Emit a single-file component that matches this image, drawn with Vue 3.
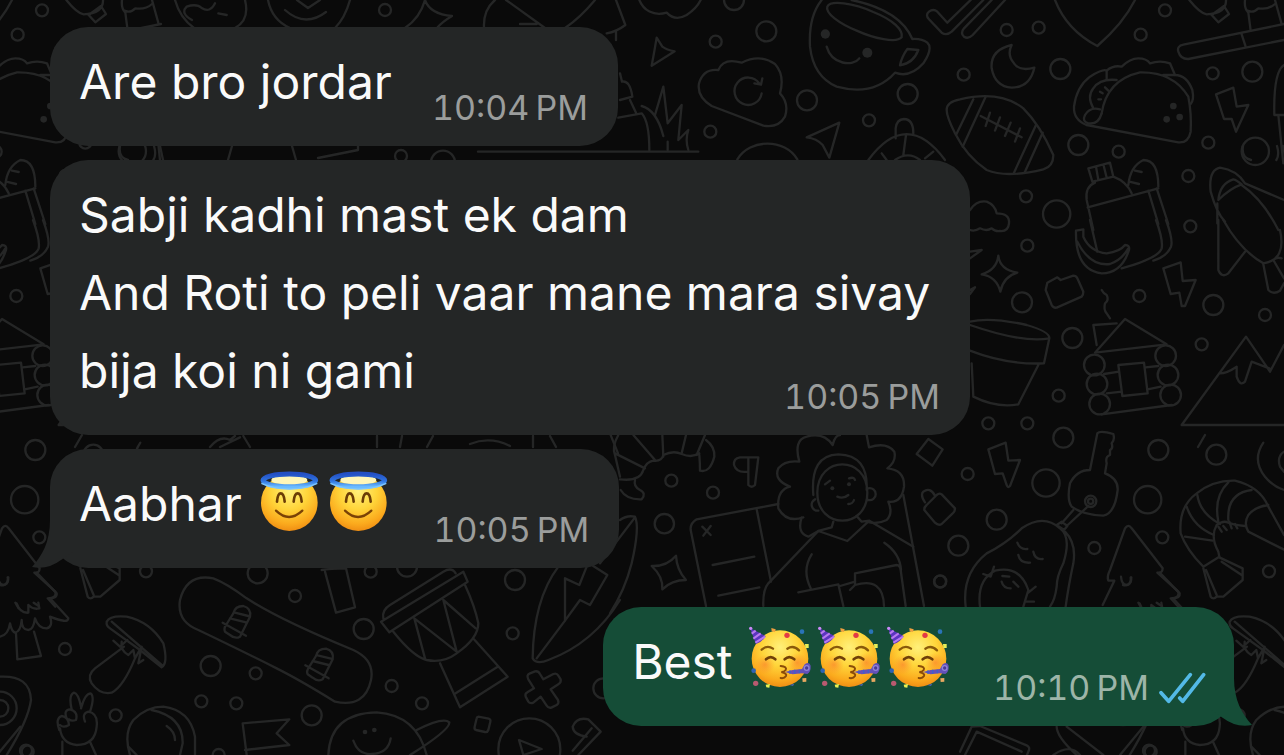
<script setup>
const messages = [
  { id: 1, text: 'Are bro jordar', time: '10:04\u2009PM' },
  { id: 2, text: 'Sabji kadhi mast ek dam\nAnd Roti to peli vaar mane mara sivay bija koi ni gami', time: '10:05\u2009PM', long: true },
  { id: 3, text: 'Aabhar ', emoji: 'angel', count: 2, time: '10:05\u2009PM', tail: true },
  { id: 4, text: 'Best ', emoji: 'party', count: 3, time: '10:10\u2009PM', tail: true, mine: true },
]

// Wallpaper doodles, grouped by area; each area is drawn on a three-times-finer grid.
const areas = [
  {
    x: 600, y: 0,
    circles: [[402, 0, 30], [499, 94, 30], [347, 125, 18], [331, 395, 18], [621, 301, 30], [807, 361, 18], [923, 282, 30]],
    dots: [[676, 102, 14], [802, 158, 15]],
    paths: [
      'M48 0L76 75Q50 95 20 100M48 95V120',
      'M118 0C130 30 160 50 200 38Q225 65 260 45Q290 25 302 0',
      'M170 113L187 140Q200 150 224 154L155 197Q163 155 170 113Z',
      'M355 210Q370 172 425 188Q480 160 525 192Q555 225 540 280Q568 310 555 350Q535 385 490 377L335 318Q290 290 297 250Q310 205 355 210Z',
      'M485 280A41 41 0 1 1 478 250M487 235L483 254L463 250',
      'M665 0Q625 50 630 140Q640 230 710 260Q820 290 885 218Q930 235 970 190Q1000 145 982 128Q965 115 937 117Q900 30 755 0',
      'M682 20C690 0 760 8 820 36C880 60 910 90 905 112C890 130 820 115 770 92C720 72 675 40 682 20Z',
      'M922 147L955 150Q940 190 900 196Q905 170 922 147Z',
      'M680 140C695 195 760 200 778 175',
      'M125 318Q170 330 190 408M165 345L190 260L203 370L245 315L235 420L265 390Q255 420 265 450M203 425V450',
      'M-366 455H295M60 220L66 245Q90 240 97 290L60 300M90 300L108 338M55 353L125 340Q148 365 148 450',
      'M718 368L688 473L668 435Q650 415 620 412Z',
      'M412 478C450 415 555 415 592 478',
      'M887 415V385Q890 358 912 357Q940 358 940 400M805 480Q920 325 1035 480M918 405L910 465M845 460L860 480M1000 455L975 475M885 480Q925 452 960 480',
    ],
  },
  {
    x: 940, y: 0,
    circles: [[200, 90, 18], [296, 83, 18], [71, 224, 18], [361, 207, 30], [415, 435, 30], [536, 455, 18], [258, 589, 18], [350, 642, 41], [675, 31, 18], [602, 104, 18], [818, 220, 18], [937, 215, 30], [805, 428, 18], [946, 454, 41], [745, 528, 18], [751, 679, 18]],
    dots: [[700, 318, 10], [719, 351, 10], [680, 358, 10]],
    paths: [
      'M92 0L22 68L-8 35Q-20 25 -33 35Q-45 45 -33 58L5 98Q20 108 35 95L130 0M155 0L72 85Q60 100 72 110Q85 118 98 105L195 0',
      'M20 330Q20 305 60 298Q180 270 250 325Q300 375 340 465Q340 500 310 508Q200 535 140 510Q80 470 45 400Q20 350 20 330Z',
      'M100 298L48 405M137 290L68 440M288 375L222 518M308 398L255 515M122 348L245 412M150 338L137 378M180 352L165 392M212 368L195 408M240 385L225 425',
      'M215 135Q150 150 155 205Q165 260 215 263Q270 262 283 203Q240 215 222 190Q200 165 215 135Z',
      'M345 0Q380 90 472 138Q550 70 585 0',
      'M748 0Q780 40 800 43Q860 40 858 0M815 45L852 18L867 42L835 67Z',
      'M1032 72L730 134Q710 138 715 155Q722 178 745 177L1032 120M905 103L917 140',
      'M932 92L925 38Q912 25 915 0M922 32Q940 40 955 25Q985 30 1005 12M1005 0L1025 72',
      'M440 375Q400 360 402 320Q410 260 450 230Q490 205 500 212Q520 195 545 200Q570 175 595 175Q620 175 630 190Q660 180 690 190L705 225Q740 225 757 270Q763 300 752 312',
      'M485 340Q500 240 600 217Q700 215 745 290Q755 340 752 395Q745 430 715 427L440 375M670 225H705M500 212V238',
      'M485 340Q475 375 445 370Q425 365 435 345Q450 320 480 328M530 240Q480 235 460 265Q440 290 460 325M480 275L488 280M495 262L505 272M475 298H483',
      'M828 283L880 263L890 320L925 315L888 395L875 357H852Z',
      'M1032 195Q1000 215 1003 345H1032M1015 345L1030 490',
      'M445 505L510 488L520 530L457 545ZM468 500L475 540M490 493L500 533M465 548Q435 560 440 600L460 690M520 530Q560 545 575 580M443 622L655 565M565 555Q570 500 610 480Q655 480 655 560M585 512L605 516M568 545L597 552M625 572L655 672M650 565L685 672',
      'M812 575Q805 510 840 503Q890 510 915 550L1032 600M812 575Q830 640 855 665M905 555Q970 600 1015 690M835 600Q840 550 880 538Q890 540 905 553Q870 565 835 600ZM832 610V670',
      'M90 630Q110 600 140 605Q165 615 170 640Q210 640 207 670Q205 695 180 693Q165 695 155 685Q140 695 120 685Q105 695 90 690',
    ],
  },
  {
    x: 940, y: 220,
    circles: [[262, 77, 18], [246, 247, 30], [397, 354, 30], [356, 527, 18], [145, 610, 18], [262, 610, 18], [370, 653, 30], [598, 228, 18], [820, 255, 30], [975, 285, 18], [785, 373, 18], [463, 435, 31], [471, 492, 31], [479, 552, 31], [677, 407, 31], [684, 465, 31], [692, 525, 31]],
    dots: [],
    paths: [
      'M175 107Q180 150 232 158Q190 170 181 215Q170 170 125 163Q170 150 175 107ZM90 95L125 90L90 115M90 210L105 202L90 222',
      'M322 188L352 172L362 180L400 167Q408 167 412 175L430 215Q430 225 425 230L350 263Q340 265 335 255L317 210Z',
      'M408 32L430 28L430 50Q450 95 500 100Q540 95 555 75Q570 75 567 90Q545 160 485 160Q405 150 408 32ZM412 65Q450 140 510 132Q545 120 565 85',
      'M450 0L472 95M648 0Q670 60 665 85Q655 115 545 145M678 0Q700 60 693 80Q680 110 640 122',
      'M485 210Q490 220 500 225Q508 240 495 250Q490 270 500 280L510 295',
      'M670 145L722 127L728 183L767 180L735 258H725L718 218L692 222Z',
      'M465 398L555 297L680 373ZM470 375L460 315L530 310M485 583L695 555M535 435L612 428L623 520L547 528ZM492 462L537 455M500 520L545 515M617 442L655 438M623 508L662 500',
      'M90 305Q150 290 260 315Q330 335 328 355Q250 370 90 315M328 355L312 430Q200 435 90 392M295 435L235 553Q170 565 100 530L95 430',
      'M1060 615H725L918 350L990 455L1032 375M840 460Q860 460 890 440V470Q900 500 915 485L935 425L988 445',
      'M835 0V150Q845 175 865 160L915 95M850 0Q900 90 970 130Q1040 120 1020 30M970 133L985 210Q1000 225 1020 212L1032 190M1000 120L1032 175M1000 120Q1010 110 1025 115',
    ],
  },
  {
    x: 940, y: 420,
    circles: [[83, 162, 18], [318, 189, 41], [170, 299, 30], [55, 377, 30], [0, 485, 18], [655, 90, 30], [829, 104, 30], [623, 239, 41], [463, 384, 18], [667, 352, 18], [987, 454, 18], [452, 244, 17], [452, 244, 8]],
    dots: [],
    paths: [
      'M145 88L197 68L205 122L240 120L210 198Q203 205 200 195L188 160L165 162Z',
      'M450 150L472 40Q480 30 520 42Q525 60 515 70Q520 85 510 90V105Q495 110 500 130L495 160Q535 175 533 210Q525 280 490 287Q430 285 395 260Q380 240 390 190Q410 150 450 150Z',
      'M400 270L365 310M445 258L380 318M350 315L365 305L382 318L372 330Z',
      'M77 560Q65 460 140 400Q200 370 245 325Q310 280 360 325Q395 350 370 430Q350 470 350 500Q345 540 330 560M375 335Q410 370 400 430Q385 500 377 560',
      'M120 560Q110 480 165 452Q240 435 265 510L250 560M232 368Q240 390 262 387M235 405Q240 430 270 428M280 395Q285 420 308 417M130 462L152 470L162 440M265 518L287 500M258 545H282M185 485Q190 505 212 505M187 468L208 470M220 485L235 500',
      'M488 555L523 482H505Q500 470 510 450L555 325Q565 310 575 325L668 445Q668 460 652 458L715 515Q720 535 692 535L715 560M543 470Q545 495 560 495Q575 492 572 472M595 548L605 565M650 548L665 558',
      'M790 440Q740 390 722 340Q715 260 770 220Q820 180 885 182Q960 200 985 260L1032 345M1050 398L925 335Q910 310 925 285Q945 260 985 255M915 318Q880 315 865 308Q850 300 830 315Q810 350 835 395L838 410L790 440',
      'M735 350L818 362M740 260Q760 320 822 345M772 225Q780 280 840 312M865 187Q820 230 835 305M935 210Q860 220 865 300M835 320L845 335M850 318L860 330M868 305L875 325M885 312L892 325',
      'M790 445L812 530Q820 540 830 530L850 530L908 480V445L838 412M798 450L830 525M845 425L905 465',
      'M970 68Q935 120 975 170Q1000 200 1032 210M1032 95Q1010 110 1020 140L1032 155',
    ],
  },
  {
    x: 600, y: 430,
    circles: [[214, 152, 18], [339, 188, 18], [193, 281, 29], [1021, 454, 18]],
    dots: [[697, 175, 6], [747, 163, 6]],
    paths: [
      'M55 15Q35 50 45 75L60 140M45 70L135 115M100 15L165 90M187 15L190 80M258 15L245 70M315 15L290 75',
      'M60 148Q120 155 130 120Q140 95 160 92Q185 95 190 75Q220 60 245 72Q275 85 298 70M318 30Q345 50 343 80Q330 130 300 122Q300 100 298 75M62 180Q80 210 125 208Q140 190 120 180Q100 170 105 150',
      'M475 82L465 165Q455 175 445 165V85M475 82H420Q400 85 402 105Q410 130 443 125',
      'M535 222L290 268Q270 280 272 300L318 528M470 238L513 455M307 290L332 315M332 288L310 317M338 405L463 380M355 497L478 472',
      'M228 377Q230 420 258 450Q215 450 187 478Q190 440 155 408Q200 410 228 377Z',
      'M60 270Q80 255 105 260Q120 290 95 400Q75 480 30 550M105 262L0 400',
      'M610 262Q560 280 535 235Q530 180 570 170Q520 150 535 115Q555 90 598 95Q580 30 620 20Q670 5 698 45Q705 15 720 15M800 15L807 52Q860 35 883 65Q890 95 862 115Q915 120 912 170Q905 220 865 215Q880 250 860 270Q830 285 800 275M605 262Q590 310 625 320L655 303',
      'M640 195Q630 75 715 73Q805 75 800 180M652 188C652 75 802 75 802 188C802 300 652 300 652 188ZM645 208A18 18 0 0 0 655 242M805 175A18 18 0 1 1 805 210M675 163L690 152M747 145Q762 140 765 150M712 200Q730 208 745 195M745 222Q758 222 762 210',
      'M700 275L695 292L655 303L742 333L808 272L940 350M770 258L785 275L808 272M655 303L505 460Q488 480 490 528M635 373Q605 420 632 475M595 487L715 463L730 528M720 468L765 455',
      'M765 430L890 405Q900 405 902 420L917 528M765 430V465L750 480M765 465Q850 440 852 528M853 338Q900 370 903 420M910 195L972 528',
      'M985 27L1028 58L997 107L950 72Z',
      'M1025 193L1065 235Q1065 245 1058 250L1025 282Q1015 288 1005 278L973 240Q972 232 980 225L1010 195Q1018 188 1025 193ZM975 217Q960 195 970 185Q990 170 1005 197',
    ],
  },
  {
    x: 0, y: 550,
    circles: [[195, 297, 18], [347, 496, 18], [83, 605, 18], [773, 70, 30], [885, 138, 18], [632, 348, 30], [767, 370, 18], [604, 454, 18], [709, 460, 18], [935, 496, 30], [656, 615, 18], [0, 475, 50], [0, 475, 25]],
    dots: [],
    paths: [
      'M110 68L170 130Q172 145 150 145L205 205Q205 222 150 200Q160 230 140 235Q115 235 105 205Q100 240 85 240Q65 240 65 210Q62 245 45 248Q35 245 30 220Q25 255 0 260M48 250L52 328L123 318L102 245M50 160Q60 190 85 188V165M85 165Q100 180 118 175L115 158M0 105Q25 110 25 82',
      'M320 215Q330 195 380 200Q450 215 490 280Q505 340 485 352L420 300L330 235Q318 228 320 215M335 215L485 345',
      'M372 290L285 355Q260 375 275 400Q300 435 335 428Q370 410 405 325M340 272L360 290L382 270M365 275Q360 300 385 315L400 300L405 325L425 290L415 340L430 330',
      'M178 540Q165 505 185 498Q205 500 207 525Q190 535 180 525M200 505Q190 480 210 478Q235 485 228 510Q215 515 207 508M215 478Q205 435 222 428Q235 430 243 470M243 475Q255 430 272 430Q285 440 270 485M255 515Q245 490 265 485Q295 490 290 530Q285 585 230 585Q185 580 180 535M187 575V615M270 575L288 615',
      'M390 615Q370 550 400 510Q440 470 490 470Q570 480 585 560V615M455 480Q550 500 548 580L540 615M385 590L410 615M500 528Q525 545 525 570',
      'M740 615L728 520L868 508L830 550L868 585L735 600',
      'M595 240Q530 215 540 150Q560 70 640 85Q680 100 740 145Q840 210 1060 300Q1125 330 1113 390Q1095 475 1005 455Q900 390 830 355Q700 290 595 240Z',
      'M700 190Q705 168 730 168Q755 175 750 200L720 260Q705 268 690 255L675 245Q670 235 680 222ZM668 218L738 257M690 205L738 217M705 188L745 198',
      'M948 318Q953 296 978 296Q1003 303 998 328L968 388Q953 396 938 383L923 373Q918 363 928 350ZM916 346L986 385M938 333L986 345M953 316L993 326',
      'M0 380Q90 375 93 450Q85 510 20 615',
    ],
  },
  {
    x: 310, y: 550,
    circles: [[182, 65, 18], [291, 50, 30], [161, 237, 30], [245, 408, 18], [336, 460, 18], [615, 90, 30], [608, 250, 18], [880, 415, 30], [658, 598, 93]],
    dots: [[165, 546, 7], [193, 540, 7]],
    paths: [
      'M45 65L78 188L135 172L108 55Q60 55 35 60',
      'M213 215L460 65L473 95L238 247ZM220 205Q215 180 240 165L400 65Q425 50 437 70M250 245Q310 320 350 330Q400 340 440 310Q505 265 505 220Q495 170 465 105M345 325L313 205L440 305L400 150L497 235M390 340L450 472L593 380L492 268M437 430L563 350',
      'M745 50Q670 150 668 325Q680 345 715 330Q850 280 930 150M680 325L765 212L810 150L840 165L892 75L845 45L830 50L808 105L765 85V212',
      'M655 388Q648 375 660 370L675 364Q685 362 690 372L700 388L730 372Q740 368 745 377L752 388Q754 398 745 403L722 418L744 450Q748 460 740 465L724 473Q715 475 710 467L692 440L670 458Q660 462 655 455L647 440Q644 430 652 427L672 415Z',
      'M55 615Q60 490 200 487Q320 495 350 615M320 540Q400 500 418 517Q420 540 300 615M130 572Q145 615 185 612Q235 610 242 565',
      'M505 500L536 506Q543 508 541 515L535 540Q532 548 525 546L498 540Q492 538 494 530L500 505Q501 500 505 500Z',
      'M627 570L695 597L640 615Z',
      'M872 545L805 615M872 545L835 508Q800 500 788 530Q790 555 830 560M845 535L788 602',
    ],
  },
  {
    x: 960, y: 600,
    circles: [[567, 452, 18]],
    dots: [],
    paths: [
      'M0 455L35 380L60 378L200 436Q212 442 205 455L195 480M15 465L50 395L185 455M290 380Q290 410 350 465M320 380L430 465M280 465Q330 430 360 465M550 380L480 465',
    ],
  },
  {
    x: 160, y: 0,
    circles: [[675, 30, 18], [723, 468, 18], [849, 488, 36]],
    dots: [],
    paths: [
      'M45 0Q60 54 102 84M255 0Q270 60 225 84M96 60Q60 40 80 20Q110 10 125 24Q150 40 165 10M175 40L200 45M324 0Q336 60 390 84M570 0Q555 54 525 84M375 30Q435 84 498 36M411 0L444 24L480 0',
      'M795 0Q780 54 735 84M795 0Q810 42 876 48Q846 66 831 84M1005 0Q969 30 972 84M1038 0L1155 84M1305 0Q1260 54 1215 84M1080 72H1130',
      'M-120 438Q-126 474 -96 480M-18 438Q-10 465 -20 480M0 438L9 480M216 438L204 480M396 438L408 480M474 474L594 450V438',
      'M651 1308V1341M726 1308L720 1341M801 1341L819 1308M930 1332Q990 1308 1050 1338M1119 1308V1341M1170 1308L1188 1341M1350 1300L1374 1360M-255 1341L-234 1305M150 1341Q180 1305 210 1320L225 1308M180 1341L240 1312M250 1308L270 1341',
    ],
  },
]
</script>

<template>
  <main class="chat">
    <svg class="wallpaper" aria-hidden="true">
      <defs>
        <g id="doodles">
          <g v-for="(a, i) in areas" :key="i" :transform="`translate(${a.x} ${a.y}) scale(0.33333)`">
            <path v-for="(d, j) in a.paths" :key="'p' + j" :d="d" />
            <circle v-for="(c, j) in a.circles" :key="'c' + j" :cx="c[0]" :cy="c[1]" :r="c[2]" />
            <circle v-for="(c, j) in a.dots" :key="'d' + j" class="dot" :cx="c[0]" :cy="c[1]" :r="c[2]" />
          </g>
        </g>
      </defs>
      <use href="#doodles" />
      <use href="#doodles" x="-1123" />
      <use href="#doodles" x="1123" />
    </svg>

    <svg class="sprites" aria-hidden="true">
      <defs>
        <radialGradient id="skin" cx="0.5" cy="0.3" r="0.72">
          <stop offset="0" stop-color="#fff07a" />
          <stop offset="0.45" stop-color="#ffd53a" />
          <stop offset="0.8" stop-color="#fbaa1d" />
          <stop offset="1" stop-color="#ee8a12" />
        </radialGradient>
        <radialGradient id="blush">
          <stop offset="0" stop-color="#fb7a2c" stop-opacity="0.6" />
          <stop offset="1" stop-color="#fb8a2c" stop-opacity="0" />
        </radialGradient>
        <linearGradient id="halo" x1="0" y1="0" x2="0" y2="1">
          <stop offset="0" stop-color="#2450c4" />
          <stop offset="0.55" stop-color="#2f74e0" />
          <stop offset="1" stop-color="#6bbcff" />
        </linearGradient>
        <symbol id="angel" viewBox="45 75 207 207">
          <circle cx="148" cy="188" r="85" fill="url(#skin)" />
          <ellipse cx="148" cy="120" rx="54" ry="15" fill="#fff6b8" />
          <ellipse cx="148" cy="121" rx="79" ry="19" fill="none" stroke="url(#halo)" stroke-width="15" />
          <path d="M64 130Q100 147 148 147Q196 147 232 130" fill="none" stroke="#7cc6ff" stroke-width="4" />
          <path d="M111 185Q113 160 122 160Q132 160 134 185M161 185Q163 160 173 160Q183 160 185 185" fill="none" stroke="#6b3d06" stroke-width="8" stroke-linecap="round" />
          <path d="M108 212Q147 250 187 212" fill="none" stroke="#7a4206" stroke-width="7" stroke-linecap="round" />
        </symbol>
        <symbol id="party" viewBox="48 75 207 207">
          <circle cx="150" cy="182" r="85" fill="url(#skin)" />
          <circle cx="105" cy="200" r="30" fill="url(#blush)" />
          <circle cx="202" cy="194" r="30" fill="url(#blush)" />
          <path d="M60 90L107 114Q97 132 78 138Z" fill="#5b35c0" />
          <path d="M65 107L77 98M70 122L92 106M76 134L105 116" stroke="#b77af0" stroke-width="6" />
          <circle cx="62" cy="91" r="5" fill="#c98af5" />
          <path d="M95 155Q112 140 129 152M172 152Q190 140 207 157" fill="none" stroke="#8a5a0a" stroke-width="7" stroke-linecap="round" />
          <path d="M108 184Q122 171 136 184M164 184Q178 171 193 184" fill="none" stroke="#704008" stroke-width="8" stroke-linecap="round" />
          <path d="M152 204Q172 206 167 216Q163 222 154 222Q172 226 168 234Q163 242 152 240" fill="none" stroke="#8a4c08" stroke-width="6" stroke-linecap="round" />
          <path d="M165 222L188 216L216 213L224 199Q238 190 242 203Q243 222 232 228L216 226L188 229Z" fill="#6550b8" />
          <circle cx="230" cy="210" r="7" fill="#4a3a94" stroke="#8f84d8" stroke-width="4" />
          <path d="M180 217V228M194 215V227M208 215V226" stroke="#3d62c8" stroke-width="4" />
          <circle cx="171" cy="112" r="8" fill="#e33a44" />
          <circle cx="216" cy="101" r="7" fill="#2a74b8" />
          <path d="M124 90L137 94L135 102L125 100Z" fill="#f0a040" />
          <path d="M225 138H236V150H226Z" fill="#e6ee58" />
          <circle cx="71" cy="218" r="7" fill="#2e62b4" />
          <circle cx="77" cy="256" r="8" fill="#b85a70" />
          <path d="M107 260L120 258L118 269L109 268Z" fill="#e8f050" />
          <path d="M217 241L229 240V251L218 252Z" fill="#e8a860" />
          <path d="M178 261L193 257L189 264Z" fill="#4862b0" />
        </symbol>
      </defs>
    </svg>

    <article
      v-for="m in messages"
      :key="m.id"
      class="bubble"
      :class="{ mine: m.mine, long: m.long }"
    >
      <span class="text">{{ m.text }}<svg v-for="n in (m.count || 0)" :key="n" class="emoji" role="img" :aria-label="m.emoji === 'angel' ? 'Smiling face with halo' : 'Partying face'"><use :href="'#' + m.emoji" /></svg></span>
      <span class="meta">
        <time>{{ m.time }}</time>
        <svg v-if="m.mine" class="ticks" viewBox="597 213 141 96" role="img" aria-label="Read">
          <path d="M603 275L626 301L691 221M659 291L668 301L731 221" />
        </svg>
      </span>
      <svg v-if="m.tail" class="tail" viewBox="0 0 48 48" aria-hidden="true">
        <path d="M18 0C18 22 10 36 0 47Q16 50 29 40L44 30V0Z" />
      </svg>
    </article>
  </main>
</template>

<style>
html,
body,
#app {
  height: 100%;
}
body {
  margin: 0;
  background: #0a0a0a;
}
</style>

<style scoped>
.chat {
  position: relative;
  box-sizing: border-box;
  min-height: 100%;
  display: flex;
  flex-direction: column;
  align-items: flex-start;
  gap: 14px;
  padding: 27px 50px 28px;
  overflow: hidden;
  background: #0a0a0a;
  font-family: Inter, "Liberation Sans", sans-serif;
}
.wallpaper {
  position: absolute;
  inset: 0;
  width: 100%;
  height: 100%;
  fill: none;
  stroke: #252626;
  stroke-width: 7;
  stroke-linecap: round;
  stroke-linejoin: round;
}
.dot {
  fill: #252626;
  stroke: none;
}
.sprites {
  position: absolute;
  width: 0;
  height: 0;
}
.bubble {
  position: relative;
  box-sizing: border-box;
  display: flex;
  align-items: flex-end;
  gap: 40px;
  max-width: 920px;
  padding: 16px 30px 17px 29px;
  border-radius: 38px;
  background: #242626;
  color: #fafafa;
}
.text {
  margin-bottom: 8px;
  font-size: 48px;
  line-height: 78px;
  white-space: pre-line;
}
.meta {
  display: flex;
  align-items: center;
  gap: 10px;
  color: #9b9d9c;
  font-size: 34px;
  font-variant-numeric: tabular-nums;
  line-height: 42px;
  white-space: nowrap;
}
.long {
  display: flow-root;
}
.long .meta {
  float: right;
  margin-top: 44px;
}
.mine {
  align-self: flex-end;
  margin-top: 25px;
  padding-right: 28px;
  background: #154d37;
}
.mine .meta {
  color: #9db5a8;
}
.emoji {
  width: 69px;
  height: 69px;
  vertical-align: top;
}
.ticks {
  width: 47px;
  height: 32px;
  fill: none;
  stroke: #53b9e6;
  stroke-width: 11;
  stroke-linecap: round;
  stroke-linejoin: round;
}
.tail {
  position: absolute;
  left: -18px;
  bottom: 0;
  width: 48px;
  height: 48px;
  fill: #242626;
}
.mine .tail {
  left: auto;
  right: -18px;
  transform: scaleX(-1);
  fill: #154d37;
}
</style>
